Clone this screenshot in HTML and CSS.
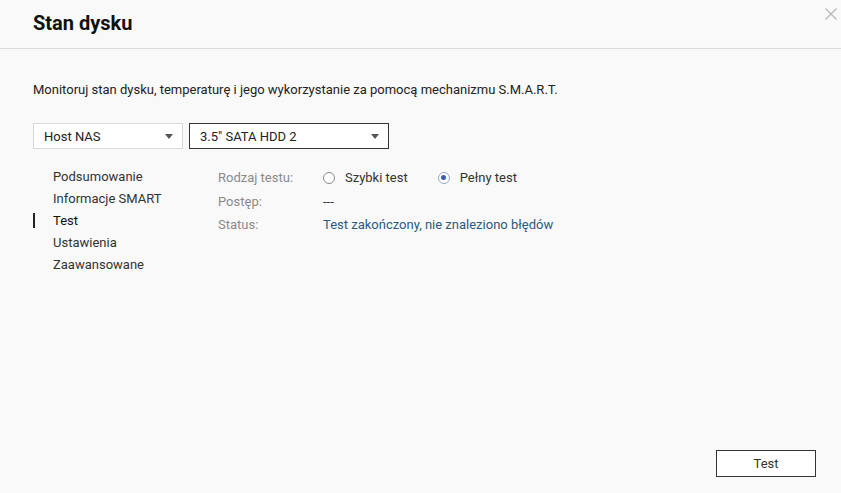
FILE: index.html
```html
<!DOCTYPE html>
<html lang="pl">
<head>
    <meta charset="UTF-8">
    <meta name="viewport" content="width=device-width, initial-scale=1.0">
    <title>Stan dysku</title>
    <link rel="stylesheet" href="styles.css">
</head>
<body>

    <div class="dialog">
        <!-- Header -->
        <div class="dialog-header">
            <h1>Stan dysku</h1>
            <button class="close-btn" aria-label="Zamknij">
                <svg width="12" height="12" viewBox="0 0 12 12">
                    <path d="M0.5 0.5 L11.5 11.5 M11.5 0.5 L0.5 11.5" stroke="#b8b8b8" stroke-width="1.3" fill="none"/>
                </svg>
            </button>
        </div>

        <div class="dialog-body">
            <p class="intro">Monitoruj stan dysku, temperaturę i jego wykorzystanie za pomocą mechanizmu S.M.A.R.T.</p>

            <div class="selectors">
                <div class="select select-host">
                    <span>Host NAS</span>
                    <span class="caret"></span>
                </div>
                <div class="select select-disk">
                    <span>3.5" SATA HDD 2</span>
                    <span class="caret"></span>
                </div>
            </div>

            <div class="content">
                <ul class="side-nav">
                    <li>Podsumowanie</li>
                    <li>Informacje SMART</li>
                    <li class="active">Test</li>
                    <li>Ustawienia</li>
                    <li>Zaawansowane</li>
                </ul>

                <div class="test-form">
                    <div class="row">
                        <span class="label">Rodzaj testu:</span>
                        <div class="value radios">
                            <label class="radio"><span class="dot"></span>Szybki test</label>
                            <label class="radio checked"><span class="dot"></span>Pełny test</label>
                        </div>
                    </div>
                    <div class="row">
                        <span class="label">Postęp:</span>
                        <span class="value">---</span>
                    </div>
                    <div class="row">
                        <span class="label">Status:</span>
                        <span class="value status">Test zakończony, nie znaleziono błędów</span>
                    </div>
                </div>
            </div>
        </div>

        <div class="dialog-footer">
            <button class="btn">Test</button>
        </div>
    </div>

</body>
</html>
```

FILE: styles.css
```css
body {
    font-family: Roboto, "Noto Sans", Arial, sans-serif;
    background-color: #f9f9f9;
    color: #222;
    margin: 0;
    width: 841px;
    height: 493px;
    overflow: hidden;
}

.dialog {
    height: 493px;
    display: flex;
    flex-direction: column;
}

/* Header */
.dialog-header {
    height: 48px;
    border-bottom: 1px solid #dcdcdc;
    display: flex;
    align-items: flex-start;
    justify-content: space-between;
    padding: 0 4px 0 33px;
}

.dialog-header h1 {
    margin: 11px 0 0;
    font-size: 20px;
    font-weight: 700;
    color: #111;
    line-height: 24px;
}

.close-btn {
    background: none;
    border: none;
    padding: 0;
    margin-top: 8px;
    width: 12px;
    height: 12px;
    cursor: pointer;
    display: flex;
}

.dialog-body {
    flex: 1;
    padding: 0 33px;
}

.intro {
    margin: 33px 0 0;
    font-size: 13px;
    line-height: 16px;
    color: #222;
}

/* Dropdowns */
.selectors {
    display: flex;
    gap: 6px;
    margin-top: 25px;
}

.select {
    box-sizing: border-box;
    height: 26px;
    display: flex;
    align-items: center;
    justify-content: space-between;
    padding: 0 9px 0 10px;
    font-size: 13px;
    background: #fff;
    color: #222;
}

.select-host {
    width: 150px;
    border: 1px solid #d8d8d8;
}

.select-disk {
    width: 200px;
    border: 1px solid #333;
}

.caret {
    width: 0;
    height: 0;
    border-left: 4px solid transparent;
    border-right: 4px solid transparent;
    border-top: 5px solid #555;
}

/* Main area */
.content {
    display: flex;
    margin-top: 17px;
}

.side-nav {
    list-style: none;
    margin: 0;
    padding: 0;
    width: 185px;
}

.side-nav li {
    font-size: 13px;
    line-height: 22px;
    padding-left: 20px;
    color: #333;
    position: relative;
}

.side-nav li.active {
    color: #111;
}

.side-nav li.active::before {
    content: "";
    position: absolute;
    left: 0;
    top: 3px;
    width: 2px;
    height: 15px;
    background: #222;
}

.test-form {
    display: flex;
    flex-direction: column;
}

.row {
    display: flex;
    align-items: center;
    height: 23.5px;
    font-size: 13px;
}

.label {
    width: 105px;
    color: #8a8a8a;
}

.value {
    color: #333;
}

.radios {
    display: flex;
    gap: 30px;
}

.radio {
    display: flex;
    align-items: center;
    gap: 10px;
    color: #333;
}

.dot {
    box-sizing: border-box;
    width: 12px;
    height: 12px;
    border: 1px solid #8a8a8a;
    border-radius: 50%;
    background: #fff;
    position: relative;
}

.radio.checked .dot {
    border-color: #9aa7c8;
}

.radio.checked .dot::after {
    content: "";
    position: absolute;
    left: 2.5px;
    top: 2.5px;
    width: 5px;
    height: 5px;
    border-radius: 50%;
    background: #3a5ea8;
}

.status {
    color: #2b5a7e;
}

/* Footer */
.dialog-footer {
    display: flex;
    justify-content: flex-end;
    padding: 0 25px 16px 0;
}

.btn {
    width: 100px;
    height: 27px;
    border: 1px solid #333;
    background: #fff;
    font-family: inherit;
    font-size: 13px;
    color: #333;
    cursor: pointer;
}
```
